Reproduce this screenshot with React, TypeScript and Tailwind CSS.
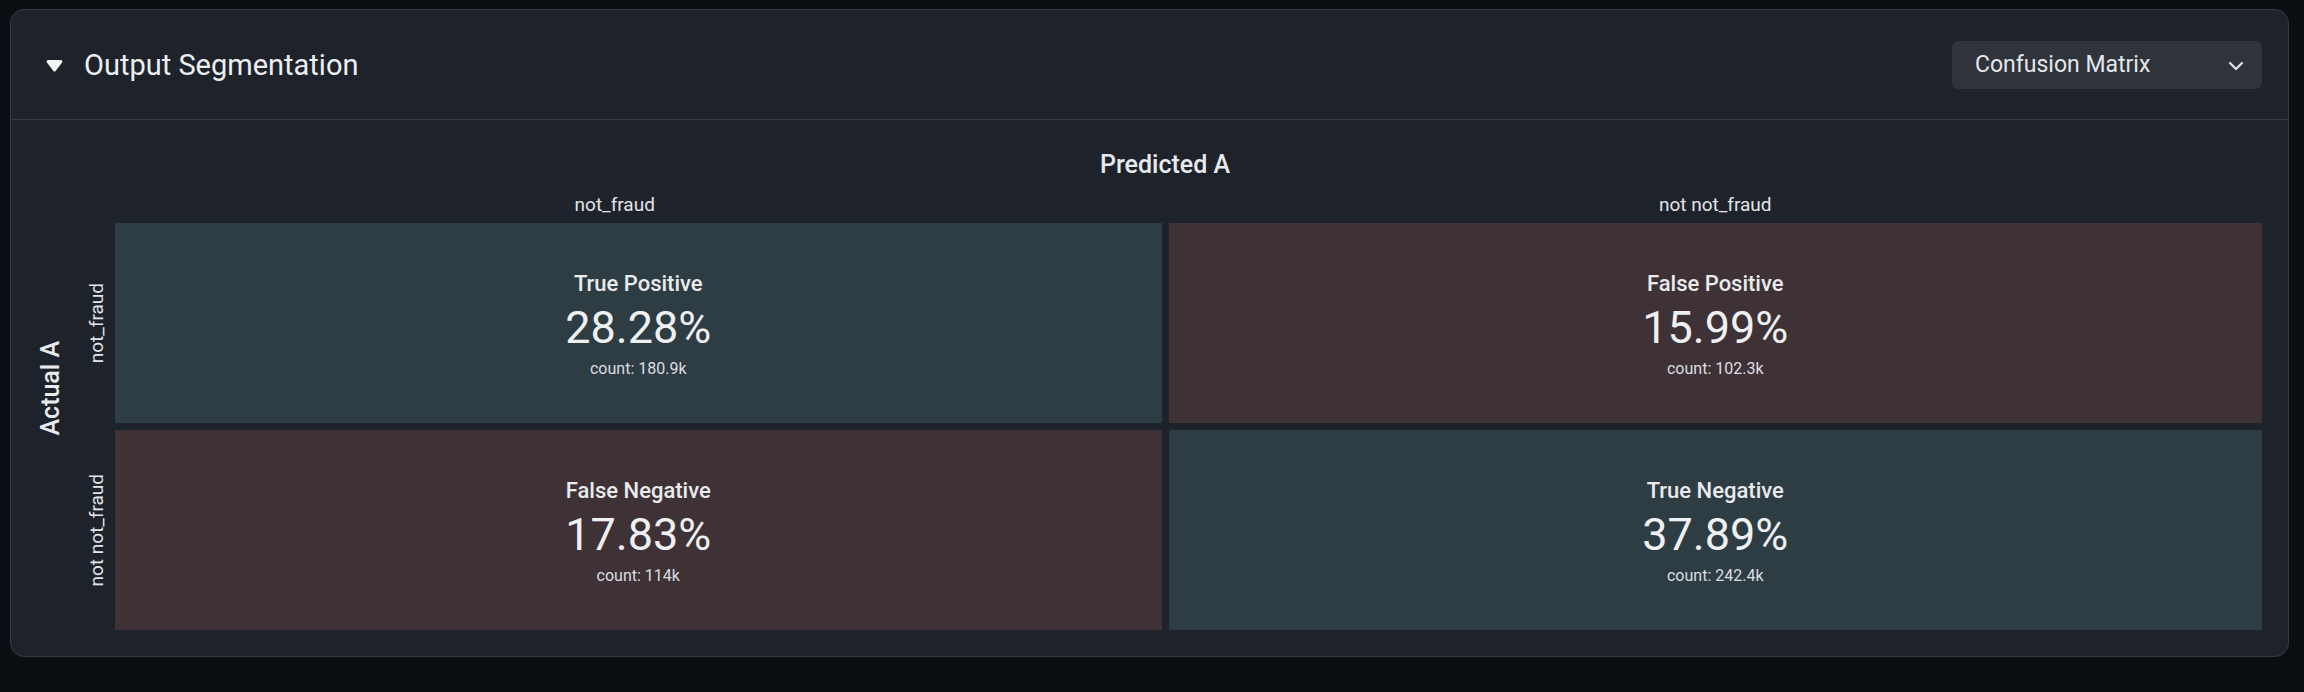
import React from "react";

type Cell = {
  title: string;
  pct: string;
  count: string;
  good: boolean;
};

const rows: { label: string; cells: Cell[] }[] = [
  {
    label: "not_fraud",
    cells: [
      { title: "True Positive", pct: "28.28%", count: "180.9k", good: true },
      { title: "False Positive", pct: "15.99%", count: "102.3k", good: false },
    ],
  },
  {
    label: "not not_fraud",
    cells: [
      { title: "False Negative", pct: "17.83%", count: "114k", good: false },
      { title: "True Negative", pct: "37.89%", count: "242.4k", good: true },
    ],
  },
];

const MatrixCell: React.FC<{ cell: Cell }> = ({ cell }) => (
  <div
    className={
      "flex h-[200px] flex-1 flex-col items-center justify-center pt-[3px] text-center " +
      (cell.good ? "bg-[#2e3c44]" : "bg-[#3e3237]")
    }
  >
    <div className="text-[22px] font-medium leading-[28px] text-[#e9ebed]">{cell.title}</div>
    <div className="mt-[4px] text-[45px] leading-[52px] text-[#eff0f1]">{cell.pct}</div>
    <div className="mt-[4px] text-[16px] leading-[22px] text-[#dcdee1]">count: {cell.count}</div>
  </div>
);

const App: React.FC = () => {
  return (
    <div className="min-h-screen bg-[#0b0e12] pb-[34px] pl-[10px] pr-[15px] pt-[9px] font-['Roboto','Liberation_Sans',sans-serif] text-[#e8eaed]">
      <div className="rounded-[14px] border border-[#353a43] bg-[#1e232b]">
        {/* Header */}
        <div className="flex h-[110px] items-center justify-between border-b border-[#353a43] pl-[35px] pr-[26px]">
          <div className="flex items-center gap-[21px]">
            <svg width="17" height="13" viewBox="0 0 17 13" className="mt-[2px]">
              <path
                d="M2.2 1h12.6a1.6 1.6 0 0 1 1.3 2.5l-6.3 8.2a1.6 1.6 0 0 1-2.6 0L0.9 3.5A1.6 1.6 0 0 1 2.2 1z"
                fill="#f4f5f6"
              />
            </svg>
            <h2 className="text-[29px] leading-[36px] text-[#eceef0]">Output Segmentation</h2>
          </div>
          <button className="flex h-[48px] w-[310px] items-center justify-between rounded-[6px] bg-[#2e333c] pl-[23px] pr-[18px]">
            <span className="text-[23px] leading-[28px] text-[#e4e6ea]">Confusion Matrix</span>
            <svg width="16" height="10" viewBox="0 0 16 10" className="mt-[2px]">
              <path
                d="M2 2l6 6 6-6"
                fill="none"
                stroke="#e4e6ea"
                strokeWidth="2.2"
                strokeLinecap="round"
                strokeLinejoin="round"
              />
            </svg>
          </button>
        </div>

        {/* Body */}
        <div className="flex">
          <div className="flex w-[57px] items-center justify-end pr-[2px]">
            <span className="rotate-180 text-[25px] font-medium leading-[30px] [writing-mode:vertical-rl]">
              Actual A
            </span>
          </div>
          <div className="flex-1 pb-[26px] pr-[26px] pt-[30px]">
            <div className="text-center text-[25px] font-medium leading-[30px]">Predicted A</div>
            <div className="mt-[13px] grid grid-cols-2 gap-[7px] text-center text-[19px] leading-[24px] text-[#e2e4e7]">
              <div>not_fraud</div>
              <div>not not_fraud</div>
            </div>
            <div className="mt-[6px] grid grid-cols-2 gap-[7px]">
              {rows.map((row) => (
                <React.Fragment key={row.label}>
                  <div className="flex">
                    <div className="flex w-[47px] items-center justify-end pr-[6px]">
                      <span className="rotate-180 text-[19px] leading-[24px] text-[#e2e4e7] [writing-mode:vertical-rl]">
                        {row.label}
                      </span>
                    </div>
                    <MatrixCell cell={row.cells[0]} />
                  </div>
                  <div className="flex">
                    <MatrixCell cell={row.cells[1]} />
                  </div>
                </React.Fragment>
              ))}
            </div>
          </div>
        </div>
      </div>
    </div>
  );
};

export default App;
